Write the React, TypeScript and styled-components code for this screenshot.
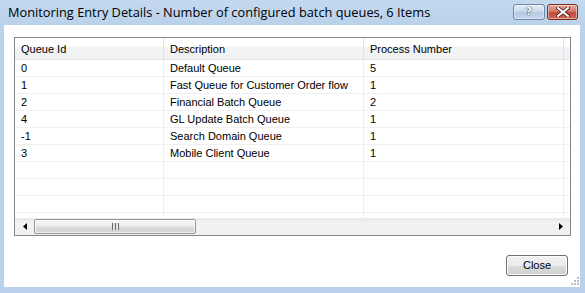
import React from "react";
import styled, { createGlobalStyle } from "styled-components";

const Global = createGlobalStyle`
  html, body { margin: 0; padding: 0; overflow: hidden; background: #b9d1ea; }
  * { box-sizing: border-box; }
`;

const Window = styled.div`
  width: 585px;
  height: 293px;
  display: flex;
  flex-direction: column;
  background: linear-gradient(#c4d9ef 0px, #b9d1ea 25px, #b9d1ea 100%);
`;

const TitleBar = styled.div`
  height: 25px;
  display: flex;
  align-items: center;
  padding: 0 8px 0 8px;
  position: relative;
`;

const Title = styled.div`
  font-family: "Open Sans", "Noto Sans", sans-serif;
  font-size: 12.8px;
  color: #000;
  flex: 1;
  white-space: nowrap;
  padding-bottom: 1px;
`;

const CaptionButtons = styled.div`
  display: flex;
  gap: 2px;
  margin-right: -1px;
  align-self: flex-start;
  margin-top: 4px;
`;

const CapButton = styled.div<{ $red?: boolean; $w: number }>`
  width: ${(p) => p.$w}px;
  height: 16px;
  border: 1px solid ${(p) => (p.$red ? "#7a2b24" : "#6f86a3")};
  border-radius: 3px;
  background: ${(p) =>
    p.$red
      ? "linear-gradient(#e6a89c 0%, #d37a6b 45%, #c24a3a 55%, #cd6a56 100%)"
      : "linear-gradient(#e3edf8 0%, #c9d9ec 45%, #b3c8e2 55%, #c5d7ec 100%)"};
  display: flex;
  align-items: center;
  justify-content: center;
  box-shadow: inset 0 0 0 1px rgba(255, 255, 255, 0.45);
`;

const HelpGlyph = styled.span`
  font-family: "DejaVu Sans", sans-serif;
  font-weight: 700;
  font-size: 11px;
  color: #ffffff;
  text-shadow: 0 0 1px #3d5170, 0 0 1px #3d5170, 0 0 1px #3d5170;
  line-height: 12px;
`;

const Client = styled.div`
  flex: 1;
  margin: 0 5px 6px 4px;
  background: #ffffff;
  display: flex;
  flex-direction: column;
  padding: 12px 10px 0 10px;
  position: relative;
`;

const GridBox = styled.div`
  width: 557px;
  height: 199px;
  border: 1px solid #828790;
  display: flex;
  flex-direction: column;
  overflow: hidden;
  font-family: "Liberation Sans", Arial, sans-serif;
  font-size: 11px;
  color: #000;
`;

const HeaderRow = styled.div`
  display: flex;
  height: 22px;
  background: linear-gradient(#ffffff 0%, #ffffff 40%, #f3f4f6 41%, #f1f2f4 100%);
  border-bottom: 1px solid #e3e5e8;
`;

const HeaderCell = styled.div<{ $w: number }>`
  width: ${(p) => p.$w}px;
  flex: none;
  border-right: 1px solid #e3e4e6;
  padding-left: 6px;
  display: flex;
  align-items: center;
  padding-top: 1px;
  white-space: nowrap;
`;

const Body = styled.div`
  flex: 1;
  overflow: hidden;
`;

const Row = styled.div`
  display: flex;
  height: 17px;
  border-bottom: 1px solid #f0f0f0;
`;

const Cell = styled.div<{ $w: number }>`
  width: ${(p) => p.$w}px;
  flex: none;
  border-right: 1px solid #f0f0f0;
  padding-left: 6px;
  display: flex;
  align-items: center;
  white-space: nowrap;
`;

const ScrollBar = styled.div`
  height: 17px;
  flex: none;
  background: linear-gradient(#e8e8e8, #f2f2f2 30%, #f0f0f0);
  display: flex;
  align-items: center;
`;

const Arrow = styled.div`
  width: 19px;
  height: 17px;
  display: flex;
  align-items: center;
  justify-content: center;
  flex: none;
`;

const Track = styled.div`
  flex: 1;
  height: 17px;
  display: flex;
  align-items: center;
`;

const Thumb = styled.div`
  width: 162px;
  height: 15px;
  border: 1px solid #979797;
  border-radius: 2px;
  background: linear-gradient(#f6f6f6 0%, #ececec 48%, #dcdcdc 52%, #d2d2d2 100%);
  display: flex;
  align-items: center;
  justify-content: center;
  box-shadow: inset 0 0 0 1px rgba(255, 255, 255, 0.6);
`;

const Grip = styled.div`
  width: 7px;
  height: 7px;
  background: repeating-linear-gradient(90deg, #6b6b6b 0 1px, #e4e4e4 1px 3px);
`;

const Footer = styled.div`
  display: flex;
  justify-content: flex-end;
  padding-top: 19px;
  padding-right: 2px;
`;

const Button = styled.div`
  width: 62px;
  height: 21px;
  border: 1px solid #707070;
  border-radius: 3px;
  background: linear-gradient(#f2f2f2 0%, #ebebeb 50%, #dddddd 51%, #cfcfcf 100%);
  box-shadow: inset 0 0 0 1px #fcfcfc;
  display: flex;
  align-items: center;
  justify-content: center;
  font-family: "Liberation Sans", Arial, sans-serif;
  font-size: 11px;
  color: #000;
  padding-bottom: 1px;
`;

const SizeGrip = styled.svg`
  position: absolute;
  right: 1px;
  bottom: 2px;
`;

const cols = [149, 200, 200, 6];
const headers = ["Queue Id", "Description", "Process Number", ""];
const data: string[][] = [
  ["0", "Default Queue", "5"],
  ["1", "Fast Queue for Customer Order flow", "1"],
  ["2", "Financial Batch Queue", "2"],
  ["4", "GL Update Batch Queue", "1"],
  ["-1", "Search Domain Queue", "1"],
  ["3", "Mobile Client Queue", "1"],
  ["", "", ""],
  ["", "", ""],
  ["", "", ""],
  ["", "", ""],
];

export default function App() {
  return (
    <>
      <Global />
      <Window>
        <TitleBar>
          <Title>Monitoring Entry Details - Number of configured batch queues, 6 Items</Title>
          <CaptionButtons>
            <CapButton $w={32}>
              <HelpGlyph>?</HelpGlyph>
            </CapButton>
            <CapButton $red $w={31}>
              <svg width="14" height="10" viewBox="0 0 14 10">
                <path d="M2 1 L12 9 M12 1 L2 9" stroke="#4a1a16" strokeWidth="3.6" strokeLinecap="square" />
                <path d="M2 1 L12 9 M12 1 L2 9" stroke="#ffffff" strokeWidth="2" strokeLinecap="square" />
              </svg>
            </CapButton>
          </CaptionButtons>
        </TitleBar>
        <Client>
          <GridBox>
            <HeaderRow>
              {headers.map((h, i) => (
                <HeaderCell key={i} $w={cols[i]}>
                  {h}
                </HeaderCell>
              ))}
            </HeaderRow>
            <Body>
              {data.map((r, ri) => (
                <Row key={ri}>
                  {r.map((c, ci) => (
                    <Cell key={ci} $w={cols[ci]}>
                      {c}
                    </Cell>
                  ))}
                  <Cell $w={cols[3]} />
                </Row>
              ))}
            </Body>
            <ScrollBar>
              <Arrow>
                <svg width="4" height="7" viewBox="0 0 4 7">
                  <path d="M4 0 L0 3.5 L4 7 Z" fill="#000" />
                </svg>
              </Arrow>
              <Track>
                <Thumb>
                  <Grip />
                </Thumb>
              </Track>
              <Arrow>
                <svg width="4" height="7" viewBox="0 0 4 7">
                  <path d="M0 0 L4 3.5 L0 7 Z" fill="#000" />
                </svg>
              </Arrow>
            </ScrollBar>
          </GridBox>
          <Footer>
            <Button>Close</Button>
          </Footer>
          <SizeGrip width="8" height="8" viewBox="0 0 8 8">
            {[
              [6, 0],
              [6, 3],
              [3, 3],
              [6, 6],
              [3, 6],
              [0, 6],
            ].map(([x, y], i) => (
              <rect key={i} x={x} y={y} width="2" height="2" fill="#b8bcc4" />
            ))}
          </SizeGrip>
        </Client>
      </Window>
    </>
  );
}
